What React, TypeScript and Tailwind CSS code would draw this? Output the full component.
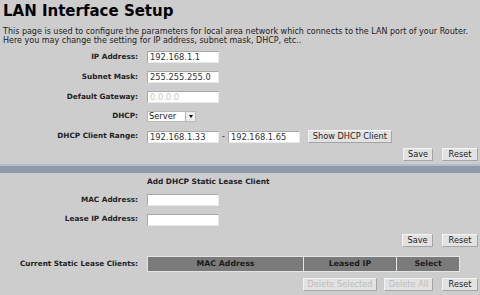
import React from "react";

const field =
  "h-[12px] w-[72px] bg-white border border-t-[#a8a8a8] border-l-[#a8a8a8] border-r-[#e8e8e8] border-b-[#e8e8e8] px-[2px] text-[8.3px] leading-[10px] text-[#333] outline-none";

function Btn({ children, disabled, className = "" }: { children: React.ReactNode; disabled?: boolean; className?: string }) {
  return (
    <button
      className={
        "h-[13px] bg-[#e2e2e2] border border-t-[#f4f4f4] border-l-[#f4f4f4] border-r-[#a4a4a4] border-b-[#a4a4a4] text-[8.2px] leading-[11px] whitespace-nowrap " +
        (disabled ? "text-[#bdbdbd] bg-[#d4d4d4]" : "text-[#222]") +
        " " +
        className
      }
    >
      {children}
    </button>
  );
}

function Row({ label, children }: { label: string; children: React.ReactNode }) {
  return (
    <div className="flex items-center h-[19.8px]">
      <div className="w-[139px] text-right font-bold text-[7.3px] text-[#222] pr-[1px] whitespace-nowrap">{label}</div>
      <div className="ml-[8px] flex items-center">{children}</div>
    </div>
  );
}

export default function App() {
  return (
    <div className="w-[480px] h-[295px] overflow-hidden bg-[#cdcdcd] text-[#222] font-['DejaVu_Sans',sans-serif]">
      <h1 className="pl-[3px] pt-[1px] text-[15px] leading-[20px] font-bold text-black">LAN Interface Setup</h1>
      <p className="mt-[6px] px-[3px] text-[8px] leading-[9px] text-[#222] whitespace-nowrap">
        This page is used to configure the parameters for local area network which connects to the LAN port of your Router.
        <br />
        Here you may change the setting for IP address, subnet mask, DHCP, etc..
      </p>

      <div className="mt-[2.5px]">
        <Row label="IP Address:">
          <input className={field} defaultValue="192.168.1.1" />
        </Row>
        <Row label="Subnet Mask:">
          <input className={field} defaultValue="255.255.255.0" />
        </Row>
        <Row label="Default Gateway:">
          <input className={field + " bg-[#ebebdf] text-[#c8c8bc]"} defaultValue="0.0.0.0" disabled />
        </Row>
        <Row label="DHCP:">
          <div className="flex h-[11px] w-[49px] bg-white border border-[#b8b8b8]">
            <span className="flex-1 text-[8.3px] leading-[9px] pl-[1px]">Server</span>
            <span className="w-[10px] flex items-center justify-center bg-[#ececec] border-l border-[#b0b0b0]">
              <span className="block w-0 h-0 border-l-[2px] border-r-[2px] border-t-[3px] border-l-transparent border-r-transparent border-t-black" />
            </span>
          </div>
        </Row>
        <Row label="DHCP Client Range:">
          <input className={field} defaultValue="192.168.1.33" />
          <span className="mx-[3px] text-[8px]">-</span>
          <input className={field} defaultValue="192.168.1.65" />
          <Btn className="ml-[8px] w-[84px]">Show DHCP Client</Btn>
        </Row>
      </div>

      <div className="flex justify-end gap-[9px] pr-[2px] mt-[2px]">
        <Btn className="w-[30px]">Save</Btn>
        <Btn className="w-[36px]">Reset</Btn>
      </div>

      <div className="mt-[3px] h-[9px] bg-[#8e9aad] border-t-[2px] border-[#b4bccb]" />

      <div className="pl-[147px] mt-[4px] text-[7.4px] leading-[9px] font-bold">Add DHCP Static Lease Client</div>
      <div className="mt-[3.6px]">
        <Row label="MAC Address:">
          <input className={field} defaultValue="" />
        </Row>
        <Row label="Lease IP Address:">
          <input className={field} defaultValue="" />
        </Row>
      </div>
      <div className="flex justify-end gap-[9px] pr-[2px] mt-[4px]">
        <Btn className="w-[31px]">Save</Btn>
        <Btn className="w-[36px]">Reset</Btn>
      </div>

      <div className="flex items-center mt-[9.5px]">
        <div className="w-[139px] text-right font-bold text-[7.3px] pr-[1px] whitespace-nowrap">Current Static Lease Clients:</div>
        <div className="ml-[8px] flex h-[16px] w-[313px] border border-[#e4e4e4] bg-[#e4e4e4] gap-[1px]">
          <div className="w-[155px] bg-[#7b7b7b] flex items-center justify-center font-bold text-[7.8px] text-[#1c1c1c]">MAC Address</div>
          <div className="w-[92px] bg-[#7b7b7b] flex items-center justify-center font-bold text-[7.8px] text-[#1c1c1c]">Leased IP</div>
          <div className="flex-1 bg-[#7b7b7b] flex items-center justify-center font-bold text-[7.8px] text-[#1c1c1c]">Select</div>
        </div>
      </div>

      <div className="flex justify-end gap-[7px] pr-[2px] mt-[6px]">
        <Btn disabled className="w-[74px]">Delete Selected</Btn>
        <Btn disabled className="w-[49px] mr-[2px]">Delete All</Btn>
        <Btn className="w-[36px]">Reset</Btn>
      </div>
    </div>
  );
}
